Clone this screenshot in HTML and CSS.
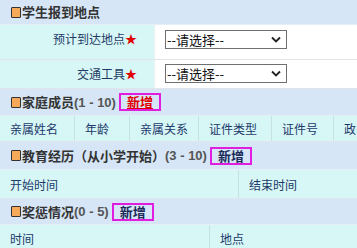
FILE: index.html
```html
<!DOCTYPE html>
<html lang="zh">
<head>
<meta charset="utf-8">
<title>学生报到</title>
<link rel="stylesheet" href="styles.css">
</head>
<body>
<div class="page">
  <div class="sec-head h1"><span class="ico"></span><span class="title">学生报到地点</span></div>
  <div class="form-row r1">
    <div class="label">预计到达地点<span class="star">★</span></div>
    <div class="value">
      <span class="sel-wrap">
        <select class="sel"><option>--请选择--</option></select>
        <svg class="chev" width="10" height="7" viewBox="0 0 10 7"><path d="M1 1.5 L5 5.5 L9 1.5" fill="none" stroke="#222" stroke-width="1.8"/></svg>
      </span>
    </div>
  </div>
  <div class="form-row r2">
    <div class="label">交通工具<span class="star">★</span></div>
    <div class="value">
      <span class="sel-wrap">
        <select class="sel"><option>--请选择--</option></select>
        <svg class="chev" width="10" height="7" viewBox="0 0 10 7"><path d="M1 1.5 L5 5.5 L9 1.5" fill="none" stroke="#222" stroke-width="1.8"/></svg>
      </span>
    </div>
  </div>

  <div class="sec-head h2"><span class="ico"></span><span class="title">家庭成员</span><span class="count">(1 - 10)</span><a class="add red">新增</a></div>
  <div class="col-row c1">
    <div class="cell w74">亲属姓名</div>
    <div class="cell w55">年龄</div>
    <div class="cell w69">亲属关系</div>
    <div class="cell w73">证件类型</div>
    <div class="cell w62">证件号</div>
    <div class="cell grow">政</div>
  </div>

  <div class="sec-head h3"><span class="ico"></span><span class="title">教育经历（从小学开始）</span><span class="count">(3 - 10)</span><a class="add">新增</a></div>
  <div class="col-row c2">
    <div class="cell w239">开始时间</div>
    <div class="cell grow">结束时间</div>
  </div>

  <div class="sec-head h4"><span class="ico"></span><span class="title">奖惩情况</span><span class="count">(0 - 5)</span><a class="add">新增</a></div>
  <div class="col-row c3">
    <div class="cell w209">时间</div>
    <div class="cell grow">地点</div>
  </div>
</div>
</body>
</html>
```

FILE: styles.css
```css
html, body {
  margin: 0;
  padding: 0;
  background: #ffffff;
}
body {
  font-family: "Noto Sans CJK SC", "DejaVu Sans", sans-serif;
  font-size: 12px;
  color: #1d3a6a;
  width: 357px;
  height: 248px;
  overflow: hidden;
}
.page {
  display: flex;
  flex-direction: column;
  width: 357px;
}
.sec-head {
  display: flex;
  align-items: center;
  background: #d6e6f6;
  border-bottom: 1px solid #e6eef6;
  padding-left: 11px;
  box-sizing: border-box;
  white-space: nowrap;
}
.h1 { height: 25px; }
.h2 { height: 27px; }
.h3 { height: 28px; }
.h4 { height: 26px; }
.ico {
  width: 8px;
  height: 9px;
  background: #f7a95a;
  border: 1px solid #333;
  border-radius: 1px;
  margin-right: 1px;
  flex: none;
}
.title {
  font-size: 13px;
  font-weight: bold;
  color: #333;
  line-height: 16px;
}
.count {
  font-family: "Liberation Sans", Arial, sans-serif;
  font-size: 13px;
  font-weight: bold;
  color: #555;
}
.add {
  margin-left: 3px;
  border: 2px solid #e01ee0;
  padding: 0 6px;
  font-size: 13px;
  font-weight: bold;
  color: #1b2a5a;
  line-height: 14px;
  height: 14px;
}
.add.red {
  color: #e00000;
  text-decoration: underline;
}
.form-row {
  display: flex;
  border-bottom: 1px solid #dfe5e8;
}
.r1 { height: 34px; }
.r2 { height: 28px; }
.label {
  width: 155px;
  flex: none;
  background: #d7f7f7;
  border-right: 1px solid #ecf2f2;
  text-align: right;
  padding-right: 17px;
  box-sizing: border-box;
  line-height: 16px;
  color: #1f3b66;
}
.r1 .label { padding-top: 6px; }
.r2 .label { padding-top: 6px; }
.star {
  color: #e00000;
  font-size: 12px;
}
.value {
  flex: 1;
  padding-left: 10px;
}
.r1 .value { padding-top: 5px; }
.r2 .value { padding-top: 4px; }
.sel-wrap {
  position: relative;
  display: inline-block;
  width: 122px;
  height: 19px;
}
.sel {
  appearance: none;
  -webkit-appearance: none;
  width: 122px;
  height: 19px;
  border: 1px solid #6f6f6f;
  border-radius: 0;
  background: #fff;
  font-family: "Noto Sans CJK SC", "DejaVu Sans", sans-serif;
  font-size: 13px;
  color: #111;
  padding: 0 0 0 1px;
  margin: 0;
  line-height: 17px;
}
.chev {
  position: absolute;
  right: 6px;
  top: 6px;
  pointer-events: none;
}
.col-row {
  display: flex;
  background: #d7f7f7;
  border-bottom: 1px solid #dfe5e8;
  white-space: nowrap;
  overflow: hidden;
}
.c1 { height: 25px; }
.c2 { height: 28px; }
.c3 { height: 26px; }
.cell {
  flex: none;
  box-sizing: border-box;
  border-right: 1px solid #c6e0e4;
  padding-left: 10px;
  display: flex;
  align-items: center;
}
.w74 { width: 75px; }
.w55 { width: 55px; }
.w69 { width: 69px; }
.w73 { width: 73px; }
.w62 { width: 62px; }
.w239 { width: 239px; }
.w209 { width: 210px; }
.grow { flex: 1 0 auto; border-right: none; }
```
